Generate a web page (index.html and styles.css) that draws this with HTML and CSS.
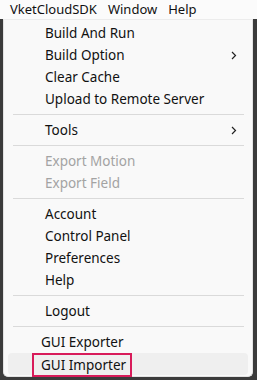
FILE: index.html
```html
<!DOCTYPE html>
<html>
<head>
<meta charset="utf-8">
<link rel="stylesheet" href="styles.css">
</head>
<body>
<div class="menubar">
  <span class="mb-item">VketCloudSDK</span>
  <span class="mb-item">Window</span>
  <span class="mb-item">Help</span>
</div>
<div class="stage">
  <div class="menu">
    <div class="item">Build And Run</div>
    <div class="item">Build Option<svg class="chev" width="6" height="9" viewBox="0 0 6 9"><path d="M1 1l3.5 3.5L1 8" fill="none" stroke="#222" stroke-width="1.2"/></svg></div>
    <div class="item">Clear Cache</div>
    <div class="item">Upload to Remote Server</div>
    <div class="sep"></div>
    <div class="item">Tools<svg class="chev" width="6" height="9" viewBox="0 0 6 9"><path d="M1 1l3.5 3.5L1 8" fill="none" stroke="#222" stroke-width="1.2"/></svg></div>
    <div class="sep"></div>
    <div class="item disabled">Export Motion</div>
    <div class="item disabled">Export Field</div>
    <div class="sep"></div>
    <div class="item">Account</div>
    <div class="item">Control Panel</div>
    <div class="item">Preferences</div>
    <div class="item">Help</div>
    <div class="sep"></div>
    <div class="item">Logout</div>
    <div class="sep"></div>
    <div class="item sub">GUI Exporter</div>
    <div class="item sub hover"><span class="mark">GUI Importer</span></div>
  </div>
</div>
</body>
</html>
```
FILE: styles.css
```css
html, body {
  margin: 0;
  padding: 0;
}
body {
  width: 257px;
  height: 380px;
  overflow: hidden;
  background: #3b3b3b;
  font-family: "Noto Sans", "Open Sans", sans-serif;
  font-size: 13.5px;
  color: #111;
}
.menubar {
  height: 19px;
  background: #fbfbfb;
  display: flex;
  align-items: center;
  padding-left: 10px;
  gap: 11px;
  font-size: 13px;
}
.mb-item {
  line-height: 19px;
}
.stage {
  padding-left: 3px;
  height: 361px;
}
.menu {
  width: 250px;
  height: 358px;
  background: #f9f9f9;
  border: 1px solid #e2e2e2;
  border-top: 1px solid #ececec;
  border-radius: 0 0 5px 5px;
  padding: 2px 4px 2px 4px;
  box-sizing: border-box;
  display: flex;
  flex-direction: column;
}
.item {
  height: 22px;
  flex: none;
  display: flex;
  align-items: center;
  padding-left: 37px;
  padding-right: 12px;
  position: relative;
  white-space: nowrap;
}
.item.disabled {
  color: #a3a3a3;
}
.item.sub {
  padding-left: 33px;
}
.item.hover {
  background: #efefef;
  border-radius: 4px;
  padding-left: 24px;
}
.mark {
  border: 2px solid #d81b5a;
  padding: 0 4px 0 7px;
  height: 20px;
  line-height: 20px;
  margin-top: 2px;
}
.chev {
  position: absolute;
  right: 11px;
  top: 7px;
}
.sep {
  height: 1px;
  flex: none;
  background: #dadada;
  margin: 4px 4px 4px 5px;
}
```
